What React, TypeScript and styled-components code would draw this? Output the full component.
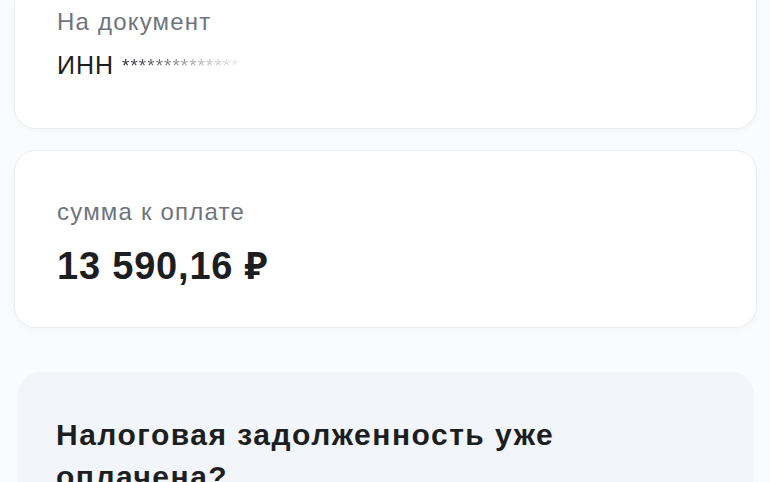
import styled, { createGlobalStyle } from "styled-components";

const GlobalStyle = createGlobalStyle`
  html, body {
    margin: 0;
    padding: 0;
    background: #fafbfc;
  }
  body {
    font-family: "Liberation Sans", Arial, "Noto Sans", sans-serif;
    -webkit-font-smoothing: antialiased;
  }
`;

const Page = styled.div`
  display: flex;
  flex-direction: column;
  padding: 0 13px 0 14px;
  height: 482px;
  overflow: hidden;
  box-sizing: border-box;
`;

const Card = styled.section<{ $cutTop?: boolean }>`
  display: flex;
  flex-direction: column;
  background: #ffffff;
  border: 1px solid #eceef2;
  border-top: ${(p) => (p.$cutTop ? "none" : "1px solid #eceef2")};
  border-radius: ${(p) => (p.$cutTop ? "0 0 22px 22px" : "22px")};
  box-shadow: 0 2px 6px rgba(30, 40, 60, 0.03);
  padding: ${(p) => (p.$cutTop ? "7px 42px 47px" : "46px 42px 39px")};
  margin-top: ${(p) => (p.$cutTop ? "0" : "21px")};
`;

const InfoCard = styled.section`
  background: #f2f5f9;
  border-radius: 22px;
  margin: 44px 3px 0 4px;
  padding: 42px 38px 20px;
`;

const Label = styled.div`
  font-size: 24px;
  line-height: 30px;
  letter-spacing: 1.2px;
  color: #6f747c;
`;

const Value = styled.div<{ $big?: boolean }>`
  font-size: ${(p) => (p.$big ? "38px" : "25px")};
  line-height: ${(p) => (p.$big ? "44px" : "30px")};
  font-weight: ${(p) => (p.$big ? 700 : 400)};
  letter-spacing: ${(p) => (p.$big ? "0.8px" : "1px")};
  color: #1c1e22;
  margin-top: ${(p) => (p.$big ? "17px" : "13px")};
  display: flex;
  align-items: baseline;
  gap: 8px;
`;

const Masked = styled.span`
  font-size: 19px;
  letter-spacing: 1px;
  color: #2e3138;
  align-self: flex-start;
  margin-top: 1px;
  filter: blur(0.7px);
  -webkit-mask-image: linear-gradient(90deg, #000 0%, rgba(0,0,0,0.45) 40%, rgba(0,0,0,0.08) 75%, rgba(0,0,0,0) 100%);
  mask-image: linear-gradient(90deg, #000 0%, rgba(0,0,0,0.45) 40%, rgba(0,0,0,0.08) 75%, rgba(0,0,0,0) 100%);
  width: 158px;
  overflow: hidden;
  white-space: nowrap;
`;

const Title = styled.h2`
  margin: 0;
  font-size: 30px;
  line-height: 42px;
  font-weight: 700;
  letter-spacing: 1.5px;
  color: #1c1e22;
  max-width: 560px;
`;

export default function App() {
  return (
    <>
      <GlobalStyle />
      <Page>
        <Card $cutTop>
          <Label>На документ</Label>
          <Value>
            ИНН
            <Masked>**************</Masked>
          </Value>
        </Card>
        <Card>
          <Label>сумма к оплате</Label>
          <Value $big>13 590,16 ₽</Value>
        </Card>
        <InfoCard>
          <Title>Налоговая задолженность уже оплачена?</Title>
        </InfoCard>
      </Page>
    </>
  );
}
